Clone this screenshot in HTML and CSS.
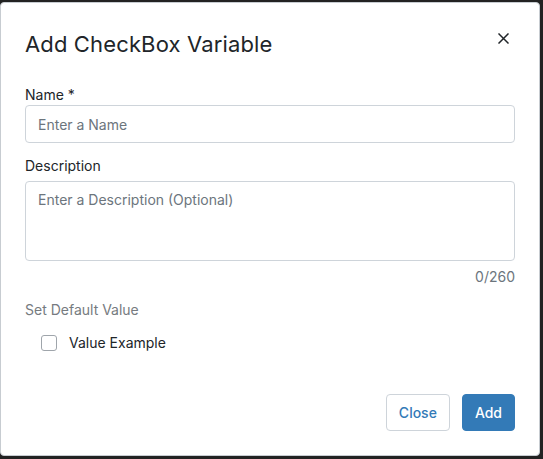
FILE: index.html
```html
<!DOCTYPE html>
<html lang="en">
<head>
<meta charset="utf-8">
<title>Add CheckBox Variable</title>
<link rel="stylesheet" href="styles.css">
</head>
<body>
<div class="modal">
  <div class="modal-header">
    <h2 class="modal-title">Add CheckBox Variable</h2>
    <button class="close-btn" type="button" aria-label="Close">
      <svg width="11" height="11" viewBox="0 0 11 11"><path d="M1 1 L10 10 M10 1 L1 10" stroke="#212529" stroke-width="1.5" stroke-linecap="square" fill="none"/></svg>
    </button>
  </div>
  <div class="modal-body">
    <label class="field-label">Name *</label>
    <input class="text-input" type="text" placeholder="Enter a Name">
    <label class="field-label desc-label">Description</label>
    <textarea class="text-area" placeholder="Enter a Description (Optional)"></textarea>
    <div class="counter">0/260</div>
    <div class="section-label">Set Default Value</div>
    <label class="check-row"><span class="checkbox"></span><span class="check-text">Value Example</span></label>
  </div>
  <div class="modal-footer">
    <button class="btn btn-outline" type="button">Close</button>
    <button class="btn btn-primary" type="button">Add</button>
  </div>
</div>
</body>
</html>
```

FILE: styles.css
```css
* { box-sizing: border-box; }

body {
  margin: 0;
  background: #222222;
  font-family: Inter, "Noto Sans", sans-serif;
}

.modal {
  margin-top: 2px;
  width: 540px;
  height: 454px;
  background: #ffffff;
  border: 1px solid #c7ccd1;
  border-radius: 4px;
  display: flex;
  flex-direction: column;
  padding: 0 24px 24px;
}

.modal-header {
  display: flex;
  justify-content: space-between;
  align-items: flex-start;
  padding-top: 27px;
}

.modal-title {
  margin: 0;
  font-size: 22px;
  font-weight: 400;
  letter-spacing: 0.14px;
  line-height: 28px;
  color: #212529;
}

.close-btn {
  width: 24px;
  height: 14px;
  margin-top: 1px;
  padding: 0;
  border: 0;
  background: transparent;
  display: flex;
  align-items: center;
  justify-content: center;
}

.modal-body {
  padding-top: 27px;
  display: flex;
  flex-direction: column;
}

.field-label {
  display: block;
  font-size: 14px;
  line-height: 20px;
  color: #212529;
}

.text-input,
.text-area {
  display: block;
  width: 100%;
  border: 1px solid #ced4da;
  border-radius: 4px;
  padding: 8px 12px;
  font-family: Inter, "Noto Sans", sans-serif;
  font-size: 14px;
  line-height: 20px;
  color: #212529;
  background: #fff;
  outline: none;
}

.text-input { height: 38px; }

.text-area {
  height: 80px;
  resize: none;
}

.text-input::placeholder,
.text-area::placeholder {
  color: #6c757d;
  opacity: 1;
}

.desc-label {
  margin-top: 13px;
  margin-bottom: 5px;
}

.counter {
  margin-top: 6px;
  text-align: right;
  font-size: 14px;
  line-height: 20px;
  color: #6c757d;
}

.section-label {
  margin-top: 13px;
  font-size: 14px;
  line-height: 20px;
  color: #767b80;
}

.check-row {
  margin-top: 13px;
  display: flex;
  align-items: center;
  gap: 12px;
  padding-left: 16px;
  font-size: 14px;
  line-height: 20px;
  color: #212529;
}

.checkbox {
  width: 16px;
  height: 16px;
  border: 1px solid #9fa5ab;
  border-radius: 3px;
  background: #fff;
}

.modal-footer {
  margin-top: auto;
  display: flex;
  justify-content: flex-end;
  gap: 12px;
}

.btn {
  font-family: Inter, "Noto Sans", sans-serif;
  font-size: 14px;
  font-weight: 500;
  line-height: 19px;
  padding: 8px 12px;
  border-radius: 4px;
  border: 1px solid transparent;
}

.btn-outline {
  background: #fff;
  border-color: #ced4da;
  color: #337ab7;
}

.btn-primary {
  background: #337ab7;
  border-color: #337ab7;
  color: #fff;
}
```
